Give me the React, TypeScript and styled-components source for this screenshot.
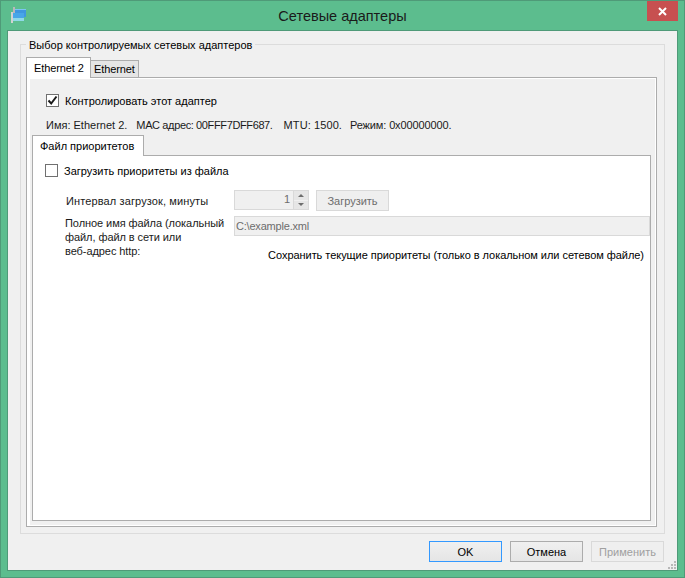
import React from 'react'
import styled, { createGlobalStyle } from 'styled-components'

const GlobalStyle = createGlobalStyle`
  html, body {
    margin: 0;
    padding: 0;
    background: #5cbd8e;
  }
  * {
    box-sizing: border-box;
  }
`

const Window = styled.div`
  width: 685px;
  height: 578px;
  padding-bottom: 6px;
  display: flex;
  flex-direction: column;
  background: #5cbd8e;
  border: 1px solid #4f9a78;
  font-family: 'Liberation Sans', Arial, sans-serif;
  font-size: 11px;
  color: #000;
`

const TitleBar = styled.div`
  height: 29px;
  flex-shrink: 0;
  position: relative;
  display: flex;
  align-items: center;
  justify-content: center;
  font-size: 14.5px;
  color: #1a1a1a;
`

const AppIcon = styled.svg`
  position: absolute;
  left: 10px;
  top: 6px;
`

const CloseButton = styled.div`
  position: absolute;
  right: 6px;
  top: 0;
  width: 31px;
  height: 20px;
  background: #c75050;
  display: flex;
  align-items: center;
  justify-content: center;
`

const Client = styled.div`
  flex: 1;
  margin: 0 6px;
  position: relative;
  background: #f0f0f0;
  border: 1px solid #4f9a78;
  padding: 13px 12px 0 12px;
  display: flex;
  flex-direction: column;
`

const GroupBox = styled.div`
  height: 490px;
  position: relative;
  border: 1px solid #dcdcdc;
  padding: 12px 7px 6px 5px;
  display: flex;
  flex-direction: column;
`

const Legend = styled.div`
  position: absolute;
  left: 5px;
  top: -7px;
  padding: 0 3px;
  background: #f0f0f0;
  line-height: 14px;
`

const TabStrip = styled.div`
  display: flex;
  align-items: flex-end;
  height: 21px;
  flex-shrink: 0;
  position: relative;
  z-index: 1;
`

const Tab = styled.div<{ $active?: boolean }>`
  width: ${(p) => (p.$active ? 65 : 49)}px;
  height: ${(p) => (p.$active ? 21 : 18)}px;
  padding-left: ${(p) => (p.$active ? 7 : 3)}px;
  letter-spacing: -0.1px;
  display: flex;
  align-items: center;
  background: ${(p) => (p.$active ? '#fff' : '#e5e5e5')};
  border: 1px solid #acacac;
  border-bottom: ${(p) => (p.$active ? 'none' : '1px solid #acacac')};
  margin-left: ${(p) => (p.$active ? 0 : -1)}px;
  position: relative;
  z-index: ${(p) => (p.$active ? 2 : 1)};
`

const TabPanel = styled.div`
  flex: 1;
  margin-top: -1px;
  border: 1px solid #acacac;
  background: #fff;
  padding: 1px 1px 1px 3px;
  display: flex;
  flex-direction: column;
`

const AdapterPage = styled.div`
  flex: 1;
  background: #f0f0f0;
  display: flex;
  flex-direction: column;
`

const TopCheckRow = styled.div`
  display: flex;
  align-items: center;
  gap: 6px;
  margin: 15px 0 0 16px;
  height: 13px;
`

const Check = styled.div`
  width: 13px;
  height: 13px;
  background: #fff;
  border: 1px solid #707070;
  flex-shrink: 0;
  display: flex;
  align-items: center;
  justify-content: center;
`

const InfoLine = styled.div`
  display: flex;
  margin: 11px 0 0 16px;
  line-height: 14px;
  white-space: pre;
  color: #1a1a1a;
`

const InfoItem = styled.span<{ $tracking: number; $after: number }>`
  letter-spacing: ${(p) => p.$tracking}px;
  margin-right: ${(p) => p.$after}px;
`

const InnerTabs = styled.div`
  flex: 1;
  margin: 3px 4px 4px 2px;
  display: flex;
  flex-direction: column;
`

const InnerTabStrip = styled.div`
  height: 21px;
  flex-shrink: 0;
  display: flex;
  position: relative;
  z-index: 1;
`

const InnerTab = styled.div`
  width: 112px;
  height: 21px;
  border: 1px solid #acacac;
  border-bottom: none;
  background: #fff;
  padding-left: 7px;
  display: flex;
  align-items: center;
`

const InnerPanel = styled.div`
  flex: 1;
  margin-top: -1px;
  background: #fff;
  border: 1px solid #acacac;
  padding: 8px 0 0 12px;
`

const FileCheckRow = styled.div`
  display: flex;
  align-items: center;
  gap: 6px;
  height: 13px;
`

const FormGrid = styled.div`
  display: grid;
  grid-template-columns: 169px 1fr;
  margin: 13px 0 0 20px;
  row-gap: 5px;
`

const FieldLabel = styled.div`
  line-height: 14px;
  color: #1a1a1a;
  align-self: center;
  padding-left: 1px;
  letter-spacing: 0.12px;
`

const FileLabel = styled.div`
  line-height: 14px;
  color: #1a1a1a;
  align-self: start;
  letter-spacing: -0.07px;
  white-space: nowrap;
`

const IntervalRow = styled.div`
  display: flex;
  gap: 7px;
  height: 21px;
`

const SpinBox = styled.div`
  width: 75px;
  height: 20px;
  border: 1px solid #d9d9d9;
  background: #f0f0f0;
  display: flex;
  justify-content: flex-end;
  color: #6d6d6d;
`

const SpinValue = styled.div`
  flex: 1;
  text-align: right;
  padding-right: 3px;
  line-height: 17px;
`

const SpinButtons = styled.div`
  width: 15px;
  border-left: 1px solid #d9d9d9;
  display: flex;
  flex-direction: column;
`

const SpinArrow = styled.div<{ $down?: boolean }>`
  flex: 1;
  background: #e6e6e6;
  margin: 0 0 ${(p) => (p.$down ? 0 : 1)}px 0;
  display: flex;
  align-items: center;
  justify-content: center;
  &::after {
    content: '';
    border-left: 3px solid transparent;
    border-right: 3px solid transparent;
    ${(p) => (p.$down ? 'border-top' : 'border-bottom')}: 3px solid #6d6d6d;
  }
`

const DisabledButton = styled.div`
  width: 73px;
  height: 21px;
  background: #efefef;
  border: 1px solid #d9d9d9;
  color: #6d6d6d;
  display: flex;
  align-items: center;
  justify-content: center;
`

const FileColumn = styled.div`
  display: flex;
  flex-direction: column;
`

const PathInput = styled.div`
  height: 20px;
  background: #f0f0f0;
  border: 1px solid #d9d9d9;
  color: #6d6d6d;
  padding-left: 1px;
  line-height: 18px;
  letter-spacing: -0.2px;
`

const SaveLink = styled.div`
  margin-top: 12px;
  padding-right: 6px;
  text-align: right;
  line-height: 14px;
  letter-spacing: -0.05px;
`

const Footer = styled.div`
  flex: 1;
  display: flex;
  justify-content: flex-end;
  gap: 8px;
  padding: 7px 1px 0 0;
`

const DialogButton = styled.div<{ $default?: boolean; $disabled?: boolean }>`
  width: 73px;
  height: 21px;
  display: flex;
  align-items: center;
  justify-content: center;
  background: ${(p) =>
    p.$disabled ? '#efefef' : 'linear-gradient(#f0f0f0, #e5e5e5)'};
  border: 1px solid
    ${(p) => (p.$default ? '#3399ff' : p.$disabled ? '#d9d9d9' : '#acacac')};
  color: ${(p) => (p.$disabled ? '#a0a0a0' : '#000')};
`

const Grip = styled.svg`
  position: absolute;
  right: 1px;
  bottom: 1px;
`

const gripDots = [
  [6, 0],
  [3, 3],
  [6, 3],
  [0, 6],
  [3, 6],
  [6, 6],
]

const App: React.FC = () => {
  return (
    <>
      <GlobalStyle />
      <Window>
        <TitleBar>
          <AppIcon width="16" height="16" viewBox="0 0 16 16">
            <rect x="2" y="0" width="2" height="11" fill="#b9b9b9" />
            <rect x="4" y="2" width="11" height="8" fill="#3f97e0" />
            <rect x="4" y="2" width="11" height="1" fill="#7cc4f2" />
            <rect x="0" y="5" width="2" height="11" fill="#d2d2d2" />
            <rect x="2" y="6" width="11" height="8" fill="#48a6e8" />
            <rect x="2" y="11" width="11" height="3" fill="#8fd9e8" />
          </AppIcon>
          Сетевые адаптеры
          <CloseButton>
            <svg width="9" height="9" viewBox="0 0 9 9">
              <path d="M1 1 L8 8 M8 1 L1 8" stroke="#fff" strokeWidth="2" />
            </svg>
          </CloseButton>
        </TitleBar>
        <Client>
          <GroupBox>
            <Legend>Выбор контролируемых сетевых адаптеров</Legend>
            <TabStrip>
              <Tab $active>Ethernet 2</Tab>
              <Tab>Ethernet</Tab>
            </TabStrip>
            <TabPanel>
              <AdapterPage>
                <TopCheckRow>
                  <Check>
                    <svg width="11" height="11" viewBox="0 0 11 11">
                      <path d="M1.5 5.5 L4.2 8.5 L9.5 1.5" fill="none" stroke="#1a1a1a" strokeWidth="2" />
                    </svg>
                  </Check>
                  Контролировать этот адаптер
                </TopCheckRow>
                <InfoLine>
                  <InfoItem $tracking={0} $after={9}>Имя: Ethernet 2.</InfoItem>
                  <InfoItem $tracking={-0.375} $after={11}>MAC адрес: 00FFF7DFF687.</InfoItem>
                  <InfoItem $tracking={0.1} $after={8}>MTU: 1500.</InfoItem>
                  <InfoItem $tracking={-0.13} $after={0}>Режим: 0x00000000.</InfoItem>
                </InfoLine>
                <InnerTabs>
                  <InnerTabStrip>
                    <InnerTab>Файл приоритетов</InnerTab>
                  </InnerTabStrip>
                  <InnerPanel>
                    <FileCheckRow>
                      <Check />
                      Загрузить приоритеты из файла
                    </FileCheckRow>
                    <FormGrid>
                      <FieldLabel>Интервал загрузок, минуты</FieldLabel>
                      <IntervalRow>
                        <SpinBox>
                          <SpinValue>1</SpinValue>
                          <SpinButtons>
                            <SpinArrow />
                            <SpinArrow $down />
                          </SpinButtons>
                        </SpinBox>
                        <DisabledButton>Загрузить</DisabledButton>
                      </IntervalRow>
                      <FileLabel>
                        Полное имя файла (локальный
                        <br />
                        файл, файл в сети или
                        <br />
                        веб-адрес http:
                      </FileLabel>
                      <FileColumn>
                        <PathInput>C:\example.xml</PathInput>
                        <SaveLink>
                          Сохранить текущие приоритеты (только в локальном или сетевом файле)
                        </SaveLink>
                      </FileColumn>
                    </FormGrid>
                  </InnerPanel>
                </InnerTabs>
              </AdapterPage>
            </TabPanel>
          </GroupBox>
          <Footer>
            <DialogButton $default>OK</DialogButton>
            <DialogButton>Отмена</DialogButton>
            <DialogButton $disabled>Применить</DialogButton>
          </Footer>
          <Grip width="8" height="8" viewBox="0 0 8 8">
            {gripDots.map(([x, y]) => (
              <rect key={`${x}-${y}`} x={x} y={y} width="2" height="2" fill="#b8b8b8" />
            ))}
          </Grip>
        </Client>
      </Window>
    </>
  )
}

export default App
